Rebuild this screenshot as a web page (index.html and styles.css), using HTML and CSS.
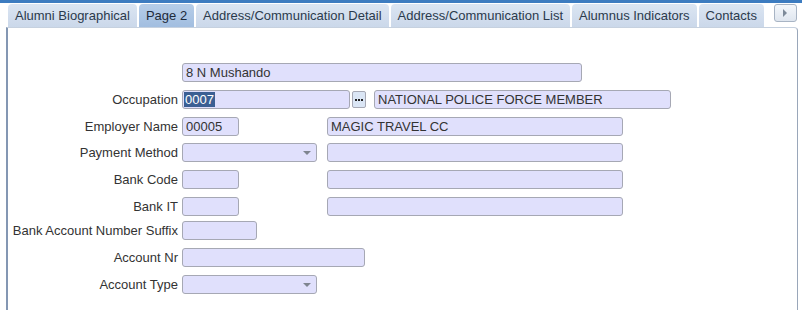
FILE: index.html
```html
<!DOCTYPE html>
<html lang="en">
<head>
    <meta charset="UTF-8">
    <title>Alumni - Page 2</title>
    <link rel="stylesheet" href="styles.css">
</head>
<body>

<div class="tabbar">
    <div class="tab">Alumni Biographical</div>
    <div class="tab active">Page 2</div>
    <div class="tab">Address/Communication Detail</div>
    <div class="tab">Address/Communication List</div>
    <div class="tab">Alumnus Indicators</div>
    <div class="tab">Contacts</div>
    <div class="tab-scroll"><span class="arrow-right"></span></div>
</div>

<div class="panel">
    <div class="row">
        <span class="label"></span>
        <div class="field w-name">8 N Mushando</div>
    </div>

    <div class="row">
        <span class="label">Occupation</span>
        <div class="field w-occ"><span class="selected">0007</span></div>
        <div class="lov"><span class="dot"></span><span class="dot"></span><span class="dot"></span></div>
        <div class="field w-occdesc">NATIONAL POLICE FORCE MEMBER</div>
    </div>

    <div class="row gap-7">
        <span class="label">Employer Name</span>
        <div class="field w-short">00005</div>
        <div class="field w-desc col2">MAGIC TRAVEL CC</div>
    </div>

    <div class="row">
        <span class="label">Payment Method</span>
        <div class="field select w-select"><span class="caret"></span></div>
        <div class="field w-desc col2b"></div>
    </div>

    <div class="row">
        <span class="label">Bank Code</span>
        <div class="field w-short"></div>
        <div class="field w-desc col2"></div>
    </div>

    <div class="row gap-5">
        <span class="label">Bank IT</span>
        <div class="field w-short"></div>
        <div class="field w-desc col2"></div>
    </div>

    <div class="row">
        <span class="label">Bank Account Number Suffix</span>
        <div class="field w-suffix"></div>
    </div>

    <div class="row">
        <span class="label">Account Nr</span>
        <div class="field w-acc"></div>
    </div>

    <div class="row">
        <span class="label">Account Type</span>
        <div class="field select w-select"><span class="caret"></span></div>
    </div>
</div>

</body>
</html>
```

FILE: styles.css
```css
/* general */
body {
    margin: 0;
    font-family: "Liberation Sans", Arial, sans-serif;
    font-size: 13px;
    color: #333;
    background-color: #fff;
    width: 802px;
    height: 310px;
    overflow: hidden;
}

/* tabs */
.tabbar {
    display: flex;
    align-items: flex-end;
    height: 27px;
    padding-left: 8px;
    border-top: 3px solid #3d7cc0;
    box-sizing: border-box;
    background-color: #fff;
}

.tab {
    height: 23px;
    line-height: 23px;
    padding: 0 7px;
    margin-right: 2px;
    font-size: 13px;
    color: #2b3a4c;
    background: linear-gradient(#dbe5f2, #cbd8ea);
    border-radius: 4px 4px 0 0;
    white-space: nowrap;
}

.tab.active {
    background: linear-gradient(#b6cde8, #a2bee0);
    color: #1d2a3a;
}

.tab-scroll {
    width: 21px;
    height: 16px;
    margin: 0 0 5px 8px;
    border: 1px solid #a8b4c4;
    border-radius: 3px;
    background: linear-gradient(#f4f7fb, #dfe6ef);
    display: flex;
    align-items: center;
    justify-content: center;
}

.arrow-right {
    width: 0;
    height: 0;
    border-top: 4px solid transparent;
    border-bottom: 4px solid transparent;
    border-left: 4px solid #7d8a99;
}

/* panel */
.panel {
    margin-left: 6px;
    margin-right: 4px;
    height: 283px;
    border-left: 2px solid #8497b3;
    border-right: 1px solid #9aa7ba;
    border-top: 1px solid #c6d1df;
    border-top-right-radius: 4px;
    padding: 35px 0 0 0;
    box-sizing: border-box;
}

.row {
    display: flex;
    align-items: center;
    height: 19px;
    margin-bottom: 8px;
}

.row.gap-7 { margin-bottom: 7px; }
.row.gap-5 { margin-bottom: 5px; }

.label {
    width: 170px;
    padding-right: 4px;
    text-align: right;
    white-space: nowrap;
    color: #333;
}

/* fields */
.field {
    position: relative;
    height: 19px;
    line-height: 17px;
    box-sizing: border-box;
    padding: 0 3px;
    background-color: #e0e0fc;
    border: 1px solid #a6a8b4;
    border-radius: 3px;
    color: #333;
    white-space: nowrap;
}

.selected {
    background-color: #3b5f93;
    color: #fff;
    margin-left: -2px;
    padding: 0 1px;
}

.w-name { width: 400px; }
.w-occ { width: 168px; }
.w-occdesc { width: 297px; margin-left: 8px; }
.w-short { width: 57px; }
.w-desc { width: 296px; }
.col2 { margin-left: 88px; }
.col2b { margin-left: 10px; }
.w-select { width: 135px; }
.w-suffix { width: 75px; }
.w-acc { width: 183px; }

/* list of values button */
.lov {
    width: 14px;
    height: 17px;
    margin-left: 2px;
    box-sizing: border-box;
    border: 1px solid #a6a8b4;
    border-radius: 2px;
    background-color: #dbe6f5;
    display: flex;
    align-items: center;
    justify-content: center;
    gap: 1px;
}

.dot {
    width: 2px;
    height: 2px;
    background-color: #222;
}

.caret {
    position: absolute;
    right: 5px;
    top: 7px;
    width: 0;
    height: 0;
    border-left: 4px solid transparent;
    border-right: 4px solid transparent;
    border-top: 4px solid #7f8590;
}
```
